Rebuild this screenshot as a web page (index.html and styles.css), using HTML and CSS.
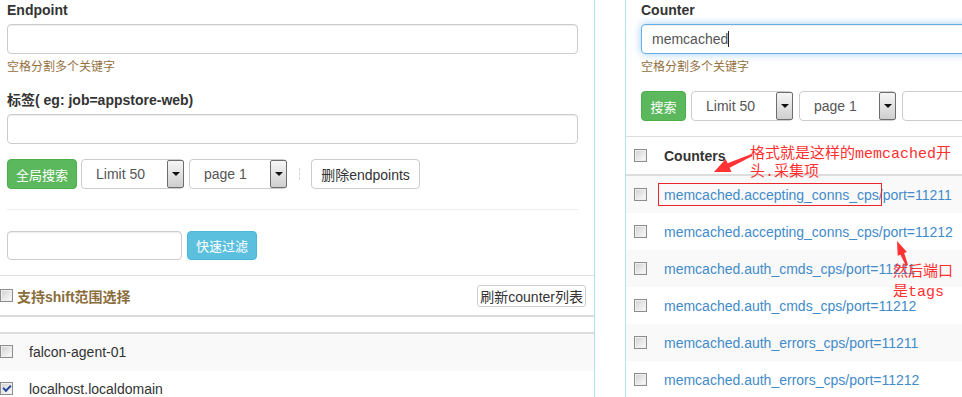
FILE: index.html
```html
<!DOCTYPE html>
<html>
	<head>
		<meta charset="utf-8">
		<title>Endpoint / Counter</title>
		<link rel="stylesheet" href="styles.css">
	</head>
	<body>
		<div class="page">
			<div class="col-left">
				<div class="left-form">
					<label class="field-label">Endpoint</label>
					<input type="text" class="text-box">
					<p class="help">空格分割多个关键字</p>
					<label class="field-label">标签( eg: job=appstore-web)</label>
					<input type="text" class="text-box">
					<div class="toolbar">
						<button class="btn btn-green btn-all">全局搜索</button>
						<div class="select sel-limit">Limit 50<span class="select-arrow"></span></div>
						<div class="select sel-page">page 1<span class="select-arrow"></span></div>
						<span class="sep"></span>
						<button class="btn btn-plain btn-del">删除endpoints</button>
					</div>
					<hr class="rule">
					<div class="filter">
						<input type="text" class="text-box filter-box">
						<button class="btn btn-blue btn-filter">快速过滤</button>
					</div>
				</div>
				<div class="shift-row">
					<label class="shift-label"><span class="cb"></span>支持shift范围选择</label>
					<button class="btn btn-plain btn-sm">刷新counter列表</button>
				</div>
				<div class="list-head"></div>
				<div class="host-row striped"><span class="cb"></span><span>falcon-agent-01</span></div>
				<div class="host-row"><span class="cb checked"></span><span>localhost.localdomain</span></div>
			</div>

			<div class="col-right">
				<div class="right-form">
					<label class="field-label">Counter</label>
					<div class="focus-box">memcached<span class="caret"></span></div>
					<p class="help">空格分割多个关键字</p>
					<div class="toolbar">
						<button class="btn btn-green btn-search">搜索</button>
						<div class="select sel-limit-r">Limit 50<span class="select-arrow"></span></div>
						<div class="select sel-page-r">page 1<span class="select-arrow"></span></div>
						<div class="box-r"></div>
					</div>
				</div>
				<div class="counter-head"><span class="cb"></span>Counters</div>
				<div class="counter-row striped"><span class="cb"></span><a href="#">memcached.accepting_conns_cps/port=11211</a></div>
				<div class="counter-row"><span class="cb"></span><a href="#">memcached.accepting_conns_cps/port=11212</a></div>
				<div class="counter-row striped"><span class="cb"></span><a href="#">memcached.auth_cmds_cps/port=11211</a></div>
				<div class="counter-row"><span class="cb"></span><a href="#">memcached.auth_cmds_cps/port=11212</a></div>
				<div class="counter-row striped"><span class="cb"></span><a href="#">memcached.auth_errors_cps/port=11211</a></div>
				<div class="counter-row"><span class="cb"></span><a href="#">memcached.auth_errors_cps/port=11212</a></div>
			</div>

			<!-- screenshot annotations -->
			<svg class="mark-layer" width="962" height="397" viewBox="0 0 962 397">
				<rect x="658.5" y="183.5" width="223" height="22" fill="none" stroke="#e8262c" stroke-width="1"/>
				<polygon fill="#ff3333" points="751.6,154.1 752.4,155.9 729.6,167.8 731.5,171.9 714,172 725.7,159.1 727.6,163.2"/>
				<polygon fill="#ff3333" points="908,265 906,266 900.4,254.7 897.7,255.8 897,241 906.9,252 904.2,253.1"/>
			</svg>
			<div class="note note-format">格式就是这样的memcached开<br>头.采集项</div>
			<div class="note note-port">然后端口<br>是tags</div>
		</div>
	</body>
</html>
```

FILE: styles.css
```css
* {
	box-sizing: border-box;
}
body {
	margin: 0;
	width: 962px;
	height: 397px;
	overflow: hidden;
	background-color: #fff;
	font-family: "Liberation Sans", Arial, "Noto Sans CJK SC", sans-serif;
	font-size: 14px;
	color: #333;
}
.page {
	position: relative;
	display: flex;
	height: 397px;
}
.col-left {
	flex: none;
	width: 595px;
	border-right: 1px solid #b5e2f0;
}
.col-right {
	flex: none;
	width: 600px;
	margin-left: 30px;
	border-left: 1px solid #b5e2f0;
}
.left-form {
	padding: 0 16px 15px 7px;
}
.right-form {
	padding: 0 0 15px 15px;
}
.field-label {
	display: block;
	font-weight: bold;
	line-height: 20px;
	margin-bottom: 4px;
}
.text-box {
	display: block;
	width: 100%;
	height: 30px;
	margin: 0;
	padding: 0 12px;
	border: 1px solid #ccc;
	border-radius: 4px;
	box-shadow: inset 0 1px 1px rgba(0,0,0,.075);
	font: inherit;
}
.help {
	margin: 5px 0 14px;
	font-size: 12px;
	line-height: 17px;
	color: #94703f;
}
.right-form .help {
	margin-bottom: 15px;
}
.toolbar {
	display: flex;
	align-items: center;
	margin-top: 15px;
}
.right-form .toolbar {
	margin-top: 0;
}
.btn {
	display: inline-flex;
	align-items: center;
	justify-content: center;
	height: 30px;
	padding: 0;
	border: 1px solid transparent;
	border-radius: 4px;
	font: inherit;
	cursor: pointer;
}
.btn-green {
	background-color: #5cb85c;
	border-color: #4cae4c;
	color: #fff;
	font-size: 13px;
}
.btn-blue {
	background-color: #5bc0de;
	border-color: #46b8da;
	color: #fff;
	font-size: 13px;
}
.btn-plain {
	background-color: #fff;
	border-color: #ccc;
	color: #333;
}
.btn-all {
	width: 70px;
}
.btn-search {
	width: 45px;
}
.btn-del {
	width: 109px;
	margin-left: 11px;
}
.btn-sm {
	height: 22px;
	padding: 0 2px;
	border-radius: 3px;
}
.select {
	display: flex;
	align-items: center;
	justify-content: space-between;
	height: 30px;
	padding-left: 14px;
	border: 1px solid #ccc;
	border-radius: 4px;
	color: #555;
	background-color: #fff;
}
.select-arrow {
	display: flex;
	align-items: center;
	justify-content: center;
	width: 17px;
	height: 28px;
	margin-right: -1px;
	border: 1px solid #6d6d6d;
	border-radius: 2px;
	background: linear-gradient(#f6f6f6, #cfcfcf);
}
.select-arrow::after {
	content: "";
	border-left: 4px solid transparent;
	border-right: 4px solid transparent;
	border-top: 4px solid #111;
}
.sel-limit {
	width: 103px;
	margin-left: 4px;
}
.sel-page {
	width: 98px;
	margin-left: 5px;
}
.sel-limit-r {
	width: 102px;
	margin-left: 5px;
}
.sel-page-r {
	width: 97px;
	margin-left: 6px;
}
.box-r {
	width: 150px;
	height: 30px;
	margin-left: 6px;
	border: 1px solid #ccc;
	border-radius: 4px;
}
.sep {
	width: 0;
	height: 12px;
	margin-left: 12px;
	border-left: 1px dashed #d3dad3;
}
.rule {
	height: 0;
	margin: 20px 0 21px;
	border: 0;
	border-top: 1px solid #eee;
}
.filter {
	display: flex;
}
.filter-box {
	width: 175px;
	height: 29px;
}
.btn-filter {
	width: 70px;
	height: 29px;
	margin-left: 5px;
}
.shift-row {
	display: flex;
	align-items: center;
	justify-content: space-between;
	height: 40px;
	padding-right: 8px;
	border-top: 1px solid #ddd;
}
.shift-label {
	display: flex;
	align-items: center;
	font-weight: bold;
	color: #8a6d3b;
}
.shift-label .cb {
	margin-right: 4px;
}
.list-head {
	height: 19px;
	border-top: 2px solid #ddd;
	border-bottom: 2px solid #ddd;
}
.host-row {
	display: flex;
	align-items: center;
	height: 37px;
	padding-bottom: 2px;
}
.host-row .cb {
	margin-right: 16px;
}
.striped {
	background-color: #f9f9f9;
}
.focus-box {
	display: flex;
	align-items: center;
	width: 560px;
	height: 30px;
	padding-left: 10px;
	border: 1px solid #66afe9;
	border-radius: 4px;
	box-shadow: inset 0 1px 1px rgba(0,0,0,.075), 0 0 8px rgba(102,175,233,.6);
	color: #555;
}
.caret {
	width: 1px;
	height: 16px;
	background-color: #222;
}
.counter-head {
	display: flex;
	align-items: center;
	height: 40px;
	padding-left: 8px;
	border-top: 1px solid #ddd;
	border-bottom: 2px solid #ddd;
	font-weight: bold;
}
.counter-row {
	display: flex;
	align-items: center;
	height: 37px;
	padding-left: 8px;
}
.counter-head .cb,
.counter-row .cb {
	margin-right: 17px;
}
.counter-row a {
	color: #428bca;
	text-decoration: none;
}
.cb {
	flex: none;
	display: inline-flex;
	align-items: center;
	justify-content: center;
	width: 13px;
	height: 13px;
	border: 1px solid #8d8d8d;
	background: linear-gradient(135deg, #d0d0d0, #fdfdfd);
	box-shadow: inset 0 0 0 1px #efefef;
}
.cb.checked::after {
	content: "";
	width: 6px;
	height: 3px;
	border-left: 2px solid #22449a;
	border-bottom: 2px solid #22449a;
	transform: translateY(-1px) rotate(-45deg);
}
.mark-layer {
	position: absolute;
	left: 0;
	top: 0;
	pointer-events: none;
}
.note {
	position: absolute;
	color: #ff3030;
	font-family: "Liberation Mono", "Noto Sans CJK SC", monospace;
	font-size: 15px;
	line-height: 18px;
	white-space: nowrap;
}
.note-format {
	left: 750px;
	top: 146px;
}
.note-port {
	left: 893px;
	top: 263px;
	line-height: 20px;
}
```
